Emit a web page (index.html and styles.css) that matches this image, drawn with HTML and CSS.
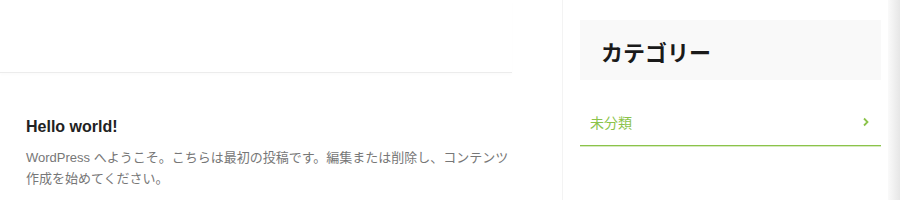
FILE: index.html
```html
<!DOCTYPE html>
<html lang="ja">
<head>
<meta charset="utf-8">
<link rel="stylesheet" href="styles.css">
</head>
<body>
<div class="page">
  <main class="main">
    <div class="top-space"></div>
    <article class="post">
      <h2 class="post-title">Hello world!</h2>
      <p class="post-excerpt">WordPress へようこそ。こちらは最初の投稿です。編集または削除し、コンテンツ作成を始めてください。</p>
    </article>
  </main>
  <aside class="sidebar">
    <div class="widget-head">
      <h3 class="widget-title">カテゴリー</h3>
    </div>
    <ul class="cat-list">
      <li class="cat-item">
        <span class="cat-name">未分類</span>
        <svg class="chev" width="8" height="10" viewBox="0 0 8 10"><path d="M2 1.5 L5.5 5 L2 8.5" fill="none" stroke="#8bc34a" stroke-width="1.8"/></svg>
      </li>
    </ul>
  </aside>
  <div class="edge"></div>
</div>
</body>
</html>
```
FILE: styles.css
```css
html, body {
  margin: 0;
  padding: 0;
  background: #fff;
}
body {
  font-family: "Liberation Sans", "Noto Sans CJK JP", sans-serif;
  width: 900px;
  height: 200px;
  overflow: hidden;
}
.page {
  display: flex;
  width: 900px;
  height: 200px;
}
.main {
  width: 512px;
  flex: none;
}
.top-space {
  height: 72px;
  border-bottom: 1px solid #ececec;
  box-shadow: 0 2px 3px rgba(0,0,0,0.015);
}
.post {
  padding: 42px 0 0 26px;
}
.post-title {
  margin: 0;
  font-size: 16px;
  line-height: 24px;
  font-weight: bold;
  color: #222;
}
.post-excerpt {
  margin: 8px 0 0;
  font-size: 13px;
  line-height: 21px;
  color: #777;
  font-family: "Liberation Sans", "Noto Sans CJK JP", sans-serif;
}
.sidebar {
  margin-left: 50px;
  width: 326px;
  flex: none;
  box-sizing: border-box;
  border-left: 1px solid #f3f3f3;
  padding: 20px 7px 0 17px;
}
.edge {
  flex: 1;
  background: linear-gradient(to right, #fafafa, #e6e6e6);
}
.widget-head {
  background: #f9f9f9;
  height: 60px;
  display: flex;
  align-items: center;
  padding-left: 21px;
}
.widget-title {
  margin: 0;
  font-size: 22px;
  font-weight: bold;
  color: #1a1a1a;
  font-family: "Noto Sans CJK JP", sans-serif;
  line-height: 1;
  padding-top: 2px;
}
.cat-list {
  list-style: none;
  margin: 22px 0 0;
  padding: 0;
}
.cat-item {
  display: flex;
  align-items: center;
  justify-content: space-between;
  height: 44px;
  box-sizing: border-box;
  border-bottom: 1px solid #8bc34a;
  box-shadow: 0 1px 0 rgba(139, 195, 74, 0.35);
  padding: 0 11px 3px 10px;
}
.cat-name {
  font-size: 14px;
  color: #8bc34a;
  font-family: "Noto Sans CJK JP", sans-serif;
}
.chev {
  display: block;
}
```
